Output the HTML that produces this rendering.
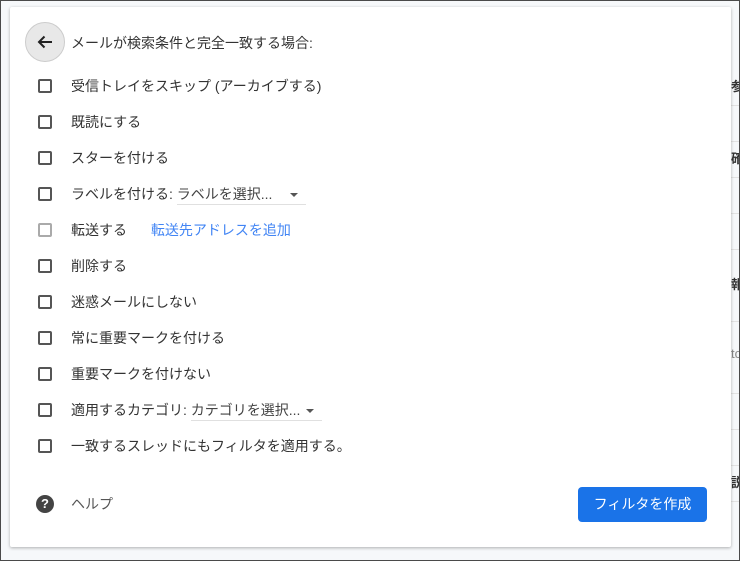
<!DOCTYPE html>
<html><head><meta charset="utf-8"><style>
*{margin:0;padding:0;box-sizing:border-box}
body{width:740px;height:561px;overflow:hidden;background:#f6f8fa;font-family:"Liberation Sans","Noto Sans CJK JP",sans-serif;position:relative;color:#202124}
.frame{position:absolute;inset:0;border:1px solid #4a4a4a;pointer-events:none;z-index:5}
.bgrow{position:absolute;left:731px;width:9px;height:1px;background:#e2e2e2}
.bgt{position:absolute;left:731px;font-size:13px;color:#333;font-weight:bold}
.dlg{position:absolute;left:10px;top:7px;width:721px;height:540px;background:#fff;box-shadow:0 1px 3px rgba(0,0,0,.3);border-radius:2px}
.back{position:absolute;left:15px;top:15px;width:40px;height:40px;border-radius:50%;background:#e8e8e8;border:1px solid #ccc}
.title{position:absolute;left:61px;top:26px;font-size:14px;color:#333}
.row{position:absolute;left:0;height:20px;font-size:14px;color:#333;white-space:nowrap}
.cb{position:absolute;left:28px;top:3px;width:14px;height:14px;border:2px solid #555;border-radius:2px}
.cb.dis{border-color:#aaa}
.lbl{position:absolute;left:61px;top:0;line-height:20px}
.sel{display:inline-block;border-bottom:1px solid #e0e0e0;color:#444;padding-right:8px}
.arr{display:inline-block;width:0;height:0;border-left:4px solid transparent;border-right:4px solid transparent;border-top:4px solid #555;vertical-align:middle;margin-left:6px}
.btn{position:absolute;left:568px;top:480px;width:129px;height:35px;background:#1a73e8;border-radius:4px;color:#fff;font-size:14px;text-align:center;line-height:35px}
</style></head><body>
<div class="bgrow" style="top:105px"></div><div class="bgrow" style="top:141px"></div><div class="bgrow" style="top:177px"></div><div class="bgrow" style="top:213px"></div><div class="bgrow" style="top:249px"></div><div class="bgrow" style="top:285px"></div><div class="bgrow" style="top:321px"></div><div class="bgrow" style="top:357px"></div><div class="bgrow" style="top:393px"></div><div class="bgrow" style="top:429px"></div><div class="bgrow" style="top:465px"></div><div class="bgrow" style="top:501px"></div>
<div class="bgt" style="top:76px">参</div><div class="bgt" style="top:148px">確</div><div class="bgt" style="top:274px">報</div><div class="bgt" style="top:346px;font-weight:normal;color:#888">to</div><div class="bgt" style="top:472px">説</div>
<div class="dlg">
<div class="back"><svg width="38" height="38" viewBox="0 0 38 38" style="position:absolute;left:0;top:0"><path d="M26 19H13M18.5 13.5L13 19l5.5 5.5" stroke="#222" stroke-width="2" fill="none"/></svg></div>
<div class="title">メールが検索条件と完全一致する場合:</div>
<div class="row" style="top:69px"><div class="cb"></div><div class="lbl">受信トレイをスキップ (アーカイブする)</div></div>
<div class="row" style="top:105px"><div class="cb"></div><div class="lbl">既読にする</div></div>
<div class="row" style="top:141px"><div class="cb"></div><div class="lbl">スターを付ける</div></div>
<div class="row" style="top:177px"><div class="cb"></div><div class="lbl">ラベルを付ける: <span class="sel">ラベルを選択... <span class="arr" style="margin-left:14px"></span></span></div></div>
<div class="row" style="top:213px"><div class="cb dis"></div><div class="lbl">転送する <span style="color:#4285f4;margin-left:20px">転送先アドレスを追加</span></div></div>
<div class="row" style="top:249px"><div class="cb"></div><div class="lbl">削除する</div></div>
<div class="row" style="top:285px"><div class="cb"></div><div class="lbl">迷惑メールにしない</div></div>
<div class="row" style="top:321px"><div class="cb"></div><div class="lbl">常に重要マークを付ける</div></div>
<div class="row" style="top:357px"><div class="cb"></div><div class="lbl">重要マークを付けない</div></div>
<div class="row" style="top:393px"><div class="cb"></div><div class="lbl">適用するカテゴリ: <span class="sel">カテゴリを選択... <span class="arr" style="margin-left:2px"></span></span></div></div>
<div class="row" style="top:429px"><div class="cb"></div><div class="lbl">一致するスレッドにもフィルタを適用する。</div></div>
<div style="position:absolute;left:26px;top:488px;width:18px;height:18px;border-radius:50%;background:#444;color:#fff;font-size:13px;font-weight:bold;text-align:center;line-height:18px">?</div>
<div style="position:absolute;left:61px;top:487px;font-size:14px;color:#555;line-height:20px">ヘルプ</div>
<div class="btn">フィルタを作成</div>
</div>
<div class="frame"></div>
</body></html>
